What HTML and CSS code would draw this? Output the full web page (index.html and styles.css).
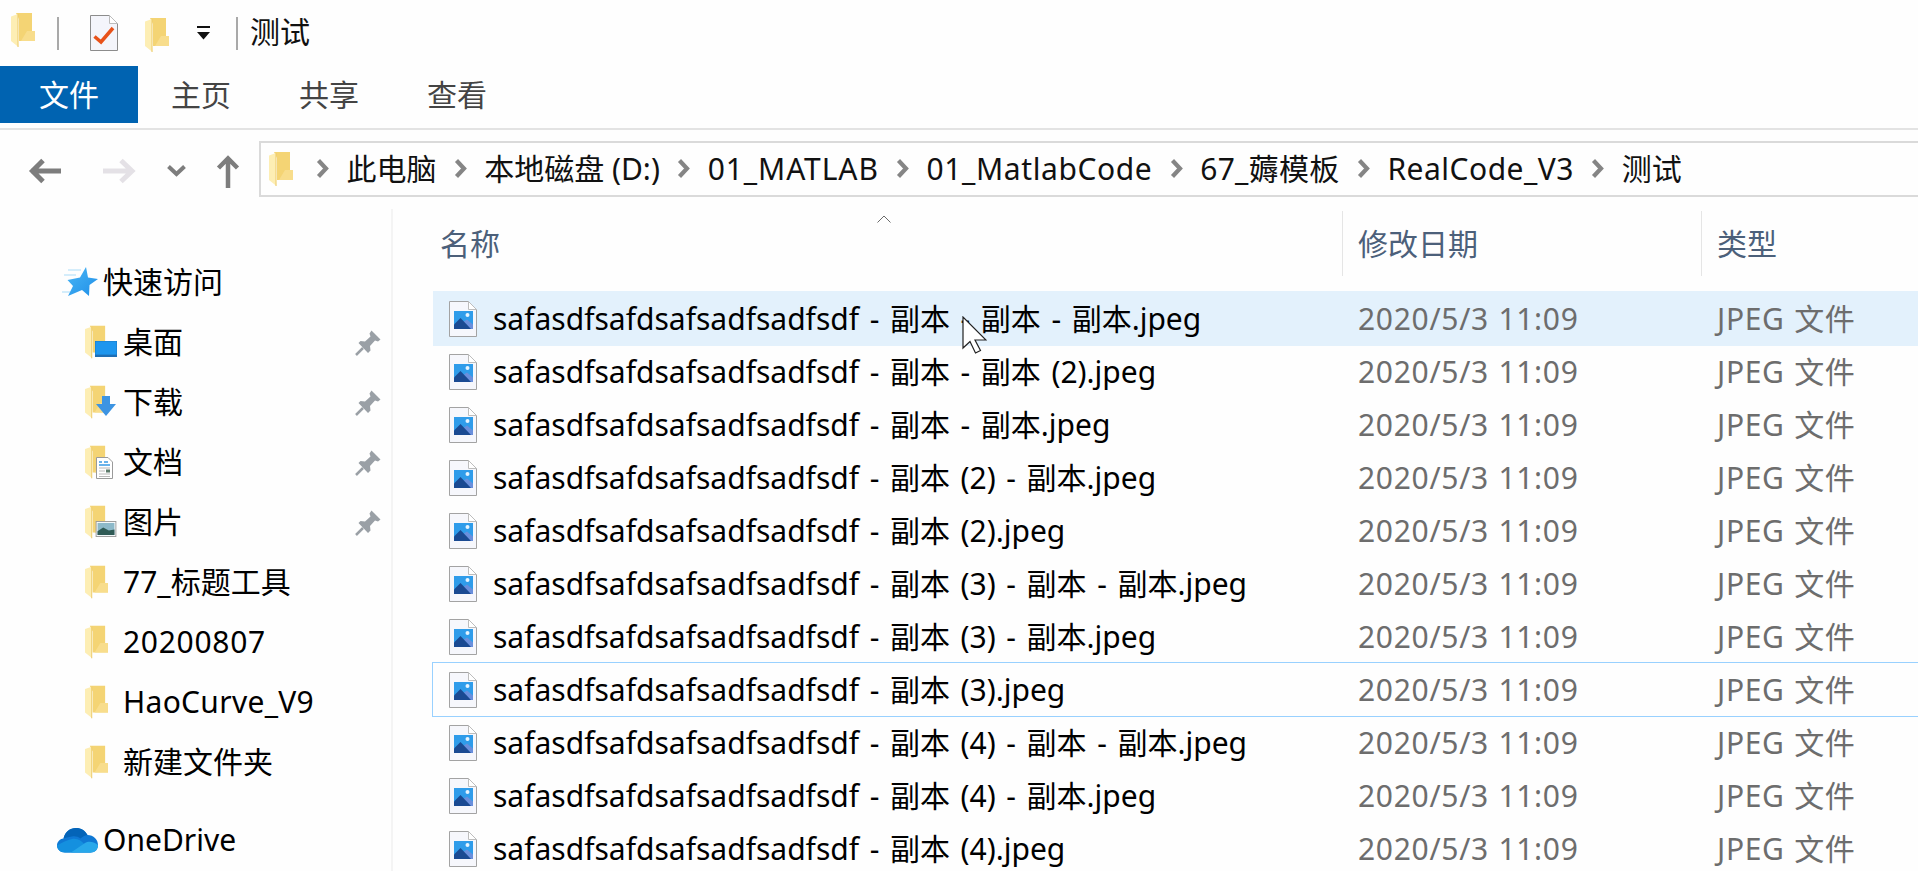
FILE: index.html
```html
<!DOCTYPE html>
<html lang="zh-CN">
<head>
<meta charset="utf-8">
<title>测试</title>
<link rel="stylesheet" href="styles.css">
</head>
<body>
<svg class="defs" width="0" height="0">
  <defs>
    <symbol id="folder" viewBox="0 0 24 34">
      <path d="M5 0H21V18L24 18V28H8V6Z" fill="#f4d474"/>
      <path d="M16 18H24V28H10Z" fill="#f8dd8c"/>
      <path d="M0 3.5L7 1V28L7.5 34L0 28Z" fill="#fdeeb4"/>
      <path d="M7 1V34" stroke="#eccb6c" stroke-width="1"/>
    </symbol>
    <symbol id="file" viewBox="0 0 28 36">
      <path d="M.5 .5H19.5L27.500 8.500V35.500H.5Z" fill="#f6f7fc" stroke="#a3a3a3"/>
      <path d="M19.500 .5V8.500H27.500Z" fill="#fff" stroke="#bdbdbd"/>
      <rect x="5" y="10" width="19" height="18" fill="#2f9cea"/>
      <path d="M14 21L18 18.500L24 23.500V28H19Z" fill="#6a8fdc"/>
      <path d="M5 28V23.500L11.500 17L22 28Z" fill="#1a4a92"/>
      <circle cx="18.500" cy="14" r="2" fill="#e6f4ff"/>
    </symbol>
    <symbol id="pin" viewBox="0 0 26 26">
      <path d="M16.500 .5L25.500 9.500L23 11.500L20 10.500L15 16L15.500 20.500L13 23L3.500 13L5.500 11L10 11.500L15.500 6.500L14.500 3.500Z" fill="#9aa0a6"/>
      <path d="M8 18L1 25" stroke="#9aa0a6" stroke-width="2.500" fill="none"/>
    </symbol>
    <symbol id="crumb" viewBox="0 0 13 19">
      <path d="M2.500 1.500L10 9.500L2.500 17.500" fill="none" stroke="#858585" stroke-width="4.200"/>
    </symbol>
  </defs>
</svg>

<header class="titlebar">
  <svg class="folder-icon folder-first"><use href="#folder"/></svg>
  <span class="qa-sep qa-sep-first"></span>
  <svg class="doc-icon" viewBox="0 0 28 36">
    <path d="M.5 .5H19.500L27.500 8.500V35.500H.5Z" fill="#f4f5fb" stroke="#8c8c8c"/>
    <path d="M19.500 .5V8.500H27.500Z" fill="#fff" stroke="#bcbcbc"/>
    <path d="M4.500 21.500L11 27L23 13" fill="none" stroke="#e8521a" stroke-width="3.500"/>
  </svg>
  <svg class="folder-icon folder-second"><use href="#folder"/></svg>
  <svg class="drop-icon" viewBox="0 0 13 14">
    <rect x="0" y="0" width="13" height="2" fill="#111"/>
    <path d="M0 6H13L6.500 13.500Z" fill="#111"/>
  </svg>
  <span class="qa-sep qa-sep-second"></span>
  <span class="title-text">测试</span>
</header>

<nav class="tabs">
  <span class="tab tab-file">文件</span>
  <span class="tab">主页</span>
  <span class="tab">共享</span>
  <span class="tab">查看</span>
</nav>

<section class="navbar">
  <div class="nav-buttons">
    <svg class="nav-svg" width="230" height="55" viewBox="0 0 230 55">
      <path d="M31 30H61M43 19.500L32.500 30L43 40.500" fill="none" stroke="#7d7d7d" stroke-width="5"/>
      <path d="M103 30H133M121 19.500L132 30L121 40.500" fill="none" stroke="#e4e1e6" stroke-width="5"/>
      <path d="M168.500 25.500L176.500 33L184.500 25.500" fill="none" stroke="#7d7d7d" stroke-width="4"/>
      <path d="M228 47V18M218.500 27L228 17.500L237.500 27" fill="none" stroke="#7d7d7d" stroke-width="4.500"/>
    </svg>
  </div>
  <div class="address">
    <svg class="folder-icon"><use href="#folder"/></svg>
    <svg class="crumb crumb-first"><use href="#crumb"/></svg>
    <span>此电脑</span>
    <svg class="crumb"><use href="#crumb"/></svg>
    <span>本地磁盘 (D:)</span>
    <svg class="crumb"><use href="#crumb"/></svg>
    <span class="seg-caps">01_MATLAB</span>
    <svg class="crumb"><use href="#crumb"/></svg>
    <span class="seg-latin">01_MatlabCode</span>
    <svg class="crumb"><use href="#crumb"/></svg>
    <span class="seg-mixed">67_薅模板</span>
    <svg class="crumb"><use href="#crumb"/></svg>
    <span class="seg-real">RealCode_V3</span>
    <svg class="crumb"><use href="#crumb"/></svg>
    <span>测试</span>
  </div>
</section>

<main class="main">
  <aside class="sidebar">
    <div class="side-row side-top">
      <svg class="star-icon" viewBox="0 0 36 30">
        <defs><linearGradient id="starfill" x1="0" y1="0" x2="1" y2="1"><stop offset="0" stop-color="#4ab6f5"/><stop offset="1" stop-color="#1f8fe8"/></linearGradient></defs>
        <path d="M6 3H19M2 8H14M0 25H8" stroke="#a9dcf8" stroke-width="1.200" fill="none"/>
        <path d="M24 0L26 10.500L36 12L27.500 18L27 29L20 23L6 29L11 19L5.500 13L18 10.500Z" fill="url(#starfill)"/>
      </svg>
      <span>快速访问</span>
    </div>
    <div class="side-row side-item">
      <span class="side-glyph">
        <svg class="side-folder"><use href="#folder"/></svg>
        <svg class="badge" viewBox="0 0 22 16"><rect width="22" height="14" y="0" fill="#1e96ee" stroke="#1a78c4"/><path d="M0 15H22" stroke="#1f6fb5" stroke-width="2"/></svg>
      </span>
      <span class="side-label">桌面</span>
      <svg class="pin-icon"><use href="#pin"/></svg>
    </div>
    <div class="side-row side-item">
      <span class="side-glyph">
        <svg class="side-folder"><use href="#folder"/></svg>
        <svg class="badge badge-down" viewBox="0 0 20 20"><path d="M6 0H14V8H20L10 20L0 8H6Z" fill="#3d94e2"/></svg>
      </span>
      <span class="side-label">下载</span>
      <svg class="pin-icon"><use href="#pin"/></svg>
    </div>
    <div class="side-row side-item">
      <span class="side-glyph">
        <svg class="side-folder"><use href="#folder"/></svg>
        <svg class="badge badge-doc" viewBox="0 0 17 22"><path d="M.5 .5H12L16.500 5V21.500H.5Z" fill="#fff" stroke="#9a9a9a"/><path d="M3 5H6M8 5H12M3 8H14" stroke="#3a9be4" stroke-width="1.500"/><path d="M3 11H14M3 14H9M3 17H14M3 19.500H14" stroke="#b9b9b9"/><rect x="10" y="12.500" width="4" height="3" fill="#5c7a6a"/></svg>
      </span>
      <span class="side-label">文档</span>
      <svg class="pin-icon"><use href="#pin"/></svg>
    </div>
    <div class="side-row side-item">
      <span class="side-glyph">
        <svg class="side-folder"><use href="#folder"/></svg>
        <svg class="badge" viewBox="0 0 22 17"><rect x=".5" y=".5" width="21" height="16" fill="#fff" stroke="#9a9a9a"/><rect x="2" y="2" width="18" height="13" fill="#8db9c9"/><path d="M2 11L8 7L14 10L20 9V15H2Z" fill="#2f5a55"/></svg>
      </span>
      <span class="side-label">图片</span>
      <svg class="pin-icon"><use href="#pin"/></svg>
    </div>
    <div class="side-row side-item"><span class="side-glyph"><svg class="side-folder"><use href="#folder"/></svg></span><span class="side-label">77_标题工具</span></div>
    <div class="side-row side-item"><span class="side-glyph"><svg class="side-folder"><use href="#folder"/></svg></span><span class="side-label side-digits">20200807</span></div>
    <div class="side-row side-item"><span class="side-glyph"><svg class="side-folder"><use href="#folder"/></svg></span><span class="side-label side-latin">HaoCurve_V9</span></div>
    <div class="side-row side-item"><span class="side-glyph"><svg class="side-folder"><use href="#folder"/></svg></span><span class="side-label">新建文件夹</span></div>
    <div class="side-row side-top side-onedrive">
      <svg class="cloud-icon" viewBox="0 0 41 26">
        <path d="M8 25.500C3 25.500 0 22 0 18.500C0 15 2.500 12 6.500 11.500C8 5 13 1 19 1C24 1 28 3.500 30.500 8C36.500 8 41 12.500 41 18C41 22.500 38 25.500 34 25.500Z" fill="#0f78d4"/>
        <path d="M6.500 11.500C8 5 13 1 19 1C24 1 28 3.500 30.500 8C27 8.500 25 10 23.500 11.500C21 9.500 18 9 15 9.500C11 10 8 11 6.500 11.500Z" fill="#0464b8"/>
        <path d="M8 25.500C3 25.500 0 22 0 18.500C3 17 7 14 15 12C20 11 24 13 28 18L34 25.500Z" fill="#1490df"/>
        <path d="M14 25.500L28 16C31 14 36 14 41 18C41 22.500 38 25.500 34 25.500Z" fill="#28a8ea"/>
      </svg>
      <span>OneDrive</span>
    </div>
  </aside>

  <section class="files">
    <div class="columns">
      <div class="col-head col-name">名称
        <svg class="sort-mark" viewBox="0 0 14 8"><path d="M.5 7.500L7 1L13.500 7.500" fill="none" stroke="#6a6a6a" stroke-width="1"/></svg>
      </div>
      <div class="col-head col-sep">修改日期</div>
      <div class="col-head col-sep">类型</div>
    </div>
    <div class="rows">
      <div class="row row-hover"><span class="cell-name"><svg class="file-icon"><use href="#file"/></svg>safasdfsafdsafsadfsadfsdf - 副本 - 副本 - 副本.jpeg</span><span class="cell-meta">2020/5/3 11:09</span><span class="cell-meta">JPEG 文件</span></div>
      <div class="row"><span class="cell-name"><svg class="file-icon"><use href="#file"/></svg>safasdfsafdsafsadfsadfsdf - 副本 - 副本 (2).jpeg</span><span class="cell-meta">2020/5/3 11:09</span><span class="cell-meta">JPEG 文件</span></div>
      <div class="row"><span class="cell-name"><svg class="file-icon"><use href="#file"/></svg>safasdfsafdsafsadfsadfsdf - 副本 - 副本.jpeg</span><span class="cell-meta">2020/5/3 11:09</span><span class="cell-meta">JPEG 文件</span></div>
      <div class="row"><span class="cell-name"><svg class="file-icon"><use href="#file"/></svg>safasdfsafdsafsadfsadfsdf - 副本 (2) - 副本.jpeg</span><span class="cell-meta">2020/5/3 11:09</span><span class="cell-meta">JPEG 文件</span></div>
      <div class="row"><span class="cell-name"><svg class="file-icon"><use href="#file"/></svg>safasdfsafdsafsadfsadfsdf - 副本 (2).jpeg</span><span class="cell-meta">2020/5/3 11:09</span><span class="cell-meta">JPEG 文件</span></div>
      <div class="row"><span class="cell-name"><svg class="file-icon"><use href="#file"/></svg>safasdfsafdsafsadfsadfsdf - 副本 (3) - 副本 - 副本.jpeg</span><span class="cell-meta">2020/5/3 11:09</span><span class="cell-meta">JPEG 文件</span></div>
      <div class="row"><span class="cell-name"><svg class="file-icon"><use href="#file"/></svg>safasdfsafdsafsadfsadfsdf - 副本 (3) - 副本.jpeg</span><span class="cell-meta">2020/5/3 11:09</span><span class="cell-meta">JPEG 文件</span></div>
      <div class="row row-focus"><span class="cell-name"><svg class="file-icon"><use href="#file"/></svg>safasdfsafdsafsadfsadfsdf - 副本 (3).jpeg</span><span class="cell-meta">2020/5/3 11:09</span><span class="cell-meta">JPEG 文件</span></div>
      <div class="row"><span class="cell-name"><svg class="file-icon"><use href="#file"/></svg>safasdfsafdsafsadfsadfsdf - 副本 (4) - 副本 - 副本.jpeg</span><span class="cell-meta">2020/5/3 11:09</span><span class="cell-meta">JPEG 文件</span></div>
      <div class="row"><span class="cell-name"><svg class="file-icon"><use href="#file"/></svg>safasdfsafdsafsadfsadfsdf - 副本 (4) - 副本.jpeg</span><span class="cell-meta">2020/5/3 11:09</span><span class="cell-meta">JPEG 文件</span></div>
      <div class="row"><span class="cell-name"><svg class="file-icon"><use href="#file"/></svg>safasdfsafdsafsadfsadfsdf - 副本 (4).jpeg</span><span class="cell-meta">2020/5/3 11:09</span><span class="cell-meta">JPEG 文件</span></div>
    </div>
  </section>
</main>

<svg class="cursor" viewBox="0 0 25 38">
  <path d="M1 1V32L8 25.500L13.500 37L18.500 34.500L13 24H24Z" fill="#fff" stroke="#222" stroke-width="1.200"/>
</svg>
</body>
</html>
```

FILE: styles.css
```css
* { box-sizing: border-box; }

html, body {
  margin: 0;
  height: 871px;
  overflow: hidden;
  background: #fefefe;
}

body {
  font-family: "Noto Sans", "Noto Sans CJK SC", sans-serif;
  font-size: 30px;
  line-height: 1;
  color: #000;
}

.defs { position: absolute; }

.titlebar {
  height: 66px;
  display: flex;
  align-items: center;
  padding-left: 11px;
}

.folder-icon { width: 24px; height: 34px; flex: none; }
.folder-first { margin-bottom: 6px; }
.folder-second { margin-left: 27px; margin-top: 4px; }

.qa-sep { width: 2px; height: 33px; background: #a9a9a9; flex: none; }
.qa-sep-first { margin-left: 22px; }
.qa-sep-second { margin-left: 26px; }

.doc-icon { width: 28px; height: 36px; margin-left: 31px; flex: none; }
.drop-icon { width: 13px; height: 14px; margin-left: 28px; flex: none; }
.title-text { margin: 0 0 2px 12px; color: #111; }

.tabs {
  height: 57px;
  display: flex;
  align-items: stretch;
  color: #444;
}

.tab {
  padding: 0 34px;
  display: flex;
  align-items: center;
}

.tab-file {
  width: 138px;
  margin-right: -1px;
  padding: 0;
  justify-content: center;
  background: #0063b1;
  color: #fff;
}

.navbar {
  height: 81px;
  margin-top: 5px;
  border-top: 2px solid #e3e3e3;
  padding-top: 11px;
  display: flex;
  align-items: flex-start;
}

.nav-buttons { width: 259px; flex: none; }
.nav-svg { display: block; overflow: visible; }

.address {
  flex: 1;
  height: 56px;
  border: 2px solid #dadada;
  border-right: 0;
  padding: 0 0 1px 8px;
  display: flex;
  align-items: center;
  white-space: nowrap;
  color: #111;
}

.seg-caps { letter-spacing: .9px; }
.seg-latin { letter-spacing: .6px; }
.seg-real { letter-spacing: .5px; }
.seg-mixed { letter-spacing: .3px; }

.crumb { width: 13px; height: 19px; margin: 0 17.4px; flex: none; }
.crumb-first { margin-left: 23px; }

.main {
  display: grid;
  grid-template-columns: 393px 1fr;
  height: 662px;
}

.sidebar {
  border-right: 2px solid #f4f4f4;
  padding-top: 43px;
}

.side-row {
  height: 60px;
  display: flex;
  align-items: center;
  white-space: nowrap;
}

.side-top { padding-left: 62px; }
.side-top span { margin-left: 5px; }
.side-item { padding-left: 85px; position: relative; }
.side-onedrive { margin-top: 18px; padding-left: 57px; }

.side-digits { letter-spacing: .7px; }
.side-latin { letter-spacing: .3px; }

.star-icon { width: 36px; height: 30px; flex: none; }
.cloud-icon { width: 41px; height: 26px; flex: none; }

.side-glyph {
  width: 38px;
  height: 34px;
  flex: none;
  position: relative;
}

.side-folder { width: 23px; height: 34px; display: block; }

.badge {
  position: absolute;
  left: 10px;
  bottom: 2px;
  width: 22px;
  height: 16px;
}

.badge-down { left: 11px; bottom: 3px; width: 20px; height: 20px; }
.badge-doc { left: 11px; bottom: 0; width: 17px; height: 22px; }

.pin-icon {
  position: absolute;
  left: 355px;
  top: 18px;
  width: 26px;
  height: 26px;
}

.files { padding: 2px 0 0 40px; min-width: 0; }

.columns {
  display: grid;
  grid-template-columns: 909px 359px 1fr;
  height: 65px;
  margin-bottom: 16px;
  color: #4c607a;
}

.col-head {
  display: flex;
  align-items: center;
  position: relative;
}

.col-name { padding-left: 7px; }
.col-sep { border-left: 1px solid #e5e5e5; padding-left: 15px; }

.sort-mark {
  position: absolute;
  left: 444px;
  top: 4px;
  width: 14px;
  height: 8px;
}

.row {
  display: grid;
  grid-template-columns: 909px 359px 1fr;
  height: 53px;
  align-items: center;
  white-space: nowrap;
  word-spacing: 2.8px;
}

.row-hover {
  background: #e3f1fc;
  box-shadow: 0 1px 0 #e3f1fc, 0 -1px 0 #e3f1fc;
}

.row-focus { outline: 1px solid #99d1ff; }

.cell-name {
  display: flex;
  align-items: center;
  gap: 16px;
  padding-left: 16px;
}

.cell-meta {
  padding-left: 16px;
  color: #6d6d6d;
  letter-spacing: .7px;
  word-spacing: 1px;
}

.file-icon { width: 28px; height: 36px; flex: none; }

.cursor {
  position: absolute;
  left: 962px;
  top: 316px;
  width: 25px;
  height: 38px;
}
```
